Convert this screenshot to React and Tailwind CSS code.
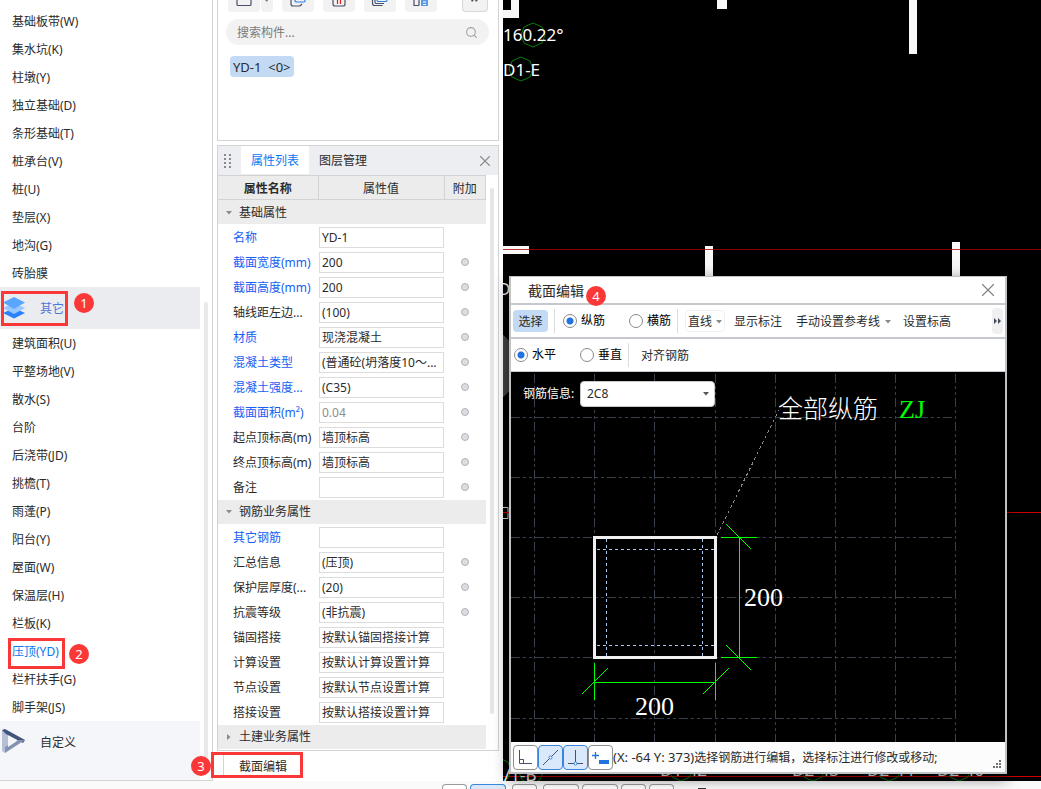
import React from 'react';
import { X, Search } from 'lucide-react';

const foundationItems = [
  '基础板带(W)', '集水坑(K)', '柱墩(Y)', '独立基础(D)', '条形基础(T)',
  '桩承台(V)', '桩(U)', '垫层(X)', '地沟(G)', '砖胎膜',
];

const otherItems = [
  '建筑面积(U)', '平整场地(V)', '散水(S)', '台阶', '后浇带(JD)', '挑檐(T)', '雨蓬(P)',
  '阳台(Y)', '屋面(W)', '保温层(H)', '栏板(K)', '压顶(YD)', '栏杆扶手(G)', '脚手架(JS)',
];

const basicProps = [
  { label: '名称', value: 'YD-1', key: true },
  { label: '截面宽度(mm)', value: '200', key: true, extra: true },
  { label: '截面高度(mm)', value: '200', key: true, extra: true },
  { label: '轴线距左边...', value: '(100)', extra: true },
  { label: '材质', value: '现浇混凝土', key: true, extra: true },
  { label: '混凝土类型', value: '(普通砼(坍落度10～...', key: true, extra: true },
  { label: '混凝土强度...', value: '(C35)', key: true, extra: true },
  { label: '截面面积(m²)', value: '0.04', key: true, extra: true, muted: true },
  { label: '起点顶标高(m)', value: '墙顶标高', extra: true },
  { label: '终点顶标高(m)', value: '墙顶标高', extra: true },
  { label: '备注', value: '', extra: true },
];

const rebarProps = [
  { label: '其它钢筋', value: '', key: true },
  { label: '汇总信息', value: '(压顶)', extra: true },
  { label: '保护层厚度(...', value: '(20)', extra: true },
  { label: '抗震等级', value: '(非抗震)', extra: true },
  { label: '锚固搭接', value: '按默认锚固搭接计算' },
  { label: '计算设置', value: '按默认计算设置计算' },
  { label: '节点设置', value: '按默认节点设置计算' },
  { label: '搭接设置', value: '按默认搭接设置计算' },
];

const gridX = [23, 83, 143, 204, 264, 324, 384, 444];
const gridY = [45, 105, 165, 225, 285, 346];

function Badge({ n, className }) {
  return (
    <span className={`absolute z-10 flex size-5 items-center justify-center rounded-full bg-[#fb3838] text-[13px] leading-none text-white ${className}`}>
      {n}
    </span>
  );
}

function Caret({ className = '' }) {
  return (
    <svg width="6" height="4" viewBox="0 0 6 4" className={className} fill="currentColor">
      <path d="M0 0h6L3 3.5z" />
    </svg>
  );
}

function Sidebar() {
  return (
    <nav className="relative flex w-[213px] shrink-0 flex-col border-r border-b border-[#d3d3d3] bg-white">
      <ul className="mr-3 pt-[7px]">
        {foundationItems.map((item) => (
          <li key={item} className="flex h-7 items-center pt-[2px] pl-3">
            <button>{item}</button>
          </li>
        ))}
      </ul>
      <div className="relative mr-3 flex h-[42px] items-center bg-[#ebecf0] text-[#4a78d8]">
        <svg width="24" height="22" viewBox="0 0 24 22" className="ml-[2px]">
          <path d="M1 16l11-5 11 5-11 5.500z" fill="#2b82ff" />
          <path d="M1 11l11-5 11 5-11 6z" fill="#98c6ff" />
          <path d="M1 5.500L12 0l11 5.500L12 12z" fill="#5aa5ff" />
        </svg>
        <button className="ml-[14px] pt-[2px]">其它</button>
        <span className="absolute top-1 left-px h-[35px] w-[67px] border-3 border-[#fb3838]" />
        <Badge n={1} className="top-[6px] left-[74px]" />
      </div>
      <ul className="mr-3">
        {otherItems.map((item) => (
          <li key={item} className="relative flex h-7 items-center pt-[2px] pl-3">
            {item === '压顶(YD)' ? (
              <>
                <button className="text-[#0a78f0]">{item}</button>
                <span className="absolute top-px left-2 h-[31px] w-[57px] border-3 border-[#fb3838]" />
                <Badge n={2} className="top-[7px] left-[69px]" />
              </>
            ) : (
              <button>{item}</button>
            )}
          </li>
        ))}
      </ul>
      <div className="mr-3 flex flex-1 items-start bg-[#f5f6fa] pt-2">
        <svg width="24" height="26" viewBox="0 0 24 26" className="ml-[2px]">
          <path d="M0 1l6 4v14l-3 5-3-2z" fill="#b5bfd6" />
          <path d="M0 1l3-1 20 11-2 3L4 5z" fill="#42557d" />
          <path d="M23 11L3 24v-6l13-7z" fill="#8492b3" />
          <path d="M6 7l9 5-9 6z" fill="#f5f6fa" />
        </svg>
        <button className="mt-1 ml-[14px] leading-5">自定义</button>
      </div>
      <span className="absolute top-[302px] right-1 bottom-5 w-1 rounded-full bg-[#e9e9e9]" />
    </nav>
  );
}

function ComponentList() {
  const tool = 'flex h-3 items-start justify-center rounded-b bg-[#f2f2f3]';
  return (
    <section className="flex h-[141px] flex-col border border-t-0 border-[#d3d3d3] bg-white">
      <div className="flex pl-[10px]">
        <button aria-label="新建" className={`${tool} w-8`}>
          <svg width="16" height="7" fill="none" stroke="#4a5068" strokeWidth="1.200"><path d="M1 0v4.500q0 1 1 1h12q1 0 1-1V0" /></svg>
        </button>
        <button aria-label="新建选项" className={`${tool} ml-px w-3`}>
          <svg width="4" height="3" fill="#777"><path d="M0 0h3L2 2z" /></svg>
        </button>
        <button aria-label="复制" className={`${tool} ml-[9px] w-8`}>
          <svg width="18" height="7" fill="none" strokeWidth="1.200">
            <path d="M2 0v4q0 2 2 2h7l2-2" stroke="#4a5068" />
            <path d="M6 0v1l1 1h8q1 0 1-2" stroke="#2b7de0" />
          </svg>
        </button>
        <button aria-label="删除" className={`${tool} ml-[9px] w-8`}>
          <svg width="14" height="7" fill="none" strokeWidth="1.200">
            <path d="M1 0v4q0 2 2 2h8q2 0 2-2V0" stroke="#4a5068" />
            <path d="M5.500 0v4M8.500 0v4" stroke="#e02020" />
          </svg>
        </button>
        <button aria-label="层间复制" className={`${tool} ml-[9px] w-8`}>
          <svg width="18" height="7" fill="none" strokeWidth="1.200">
            <path d="M1.500 0v3q0 2.500 2 2.500h8M4 0v2q0 1.500 1 1.500h8" stroke="#4a5068" />
            <path d="M6 0q0 1.500 1 1.500h8q1 0 1-1.500" stroke="#2b7de0" />
          </svg>
        </button>
        <button aria-label="存档" className={`${tool} ml-[9px] w-8`}>
          <svg width="16" height="7" fill="none" strokeWidth="1.200">
            <path d="M1 0v5.500h5M6 0v5.500" stroke="#4a5068" />
            <path d="M8 0h7v6H8z" fill="#5a9bea" />
            <path d="M10 2h3M10 4.500h3" stroke="#fff" />
          </svg>
        </button>
        <button aria-label="更多" className="ml-[25px] flex h-3 w-[26px] items-start justify-center rounded-b border border-t-0 border-[#d8d8d8] bg-[#f2f2f3]">
          <svg width="8" height="3" fill="#555"><path d="M0 0h3L1 2zM4 0h3L5 2z" /></svg>
        </button>
      </div>
      <label className="mt-[7px] mr-[9px] ml-2 flex h-[26px] items-center rounded-full bg-[#f2f2f2] px-[11px]">
        <input className="w-full bg-transparent pt-[2px] outline-none placeholder:text-[#7a7a7a]" placeholder="搜索构件..." aria-label="搜索构件" />
        <Search className="size-[13px] shrink-0 text-[#a0a0a0]" />
      </label>
      <button className="mt-[11px] ml-3 h-[21px] self-start rounded-sm bg-[#c2daf3] px-[3px] text-[13px]">YD-1 &nbsp;&lt;0&gt;</button>
    </section>
  );
}

function GroupRow({ title, closed }) {
  return (
    <tr className="h-[25px]">
      <td colSpan={3} className="border-b border-white bg-[#ececec] p-0 pt-px">
        <button className="flex items-center">
          <Caret className={`ml-2 text-[#8a8a8a] ${closed ? '-rotate-90' : ''}`} />
          <span className="ml-[7px]">{title}</span>
        </button>
      </td>
    </tr>
  );
}

function PropRow({ row }) {
  return (
    <tr className="h-[25px]">
      <td className={`overflow-hidden p-0 pt-[2px] pl-[15px] whitespace-nowrap ${row.key ? 'text-[#1560f5]' : ''}`}>
        <label htmlFor={row.label}>{row.label}</label>
      </td>
      <td className="p-0 pl-px">
        <input
          id={row.label}
          defaultValue={row.value}
          className={`block h-[21px] w-[125px] border border-[#dcdcdc] bg-white px-[2px] outline-none ${row.muted ? 'text-[#8c8c8c]' : ''}`}
        />
      </td>
      <td className="p-0 text-center">
        {row.extra && (
          <input
            type="checkbox"
            aria-label={`附加 ${row.label}`}
            className="mx-auto block size-2 appearance-none rounded-full border border-[#b3b4b8] bg-[#dcdde0]"
          />
        )}
      </td>
    </tr>
  );
}

function PropertyPanel() {
  return (
    <section className="relative mt-1 border border-[#d3d3d3] bg-white">
      <header className="flex h-[29px] items-center bg-[#edeef1]">
        <svg width="7" height="14" className="ml-[6px]" fill="#8a8a8a">
          {[0, 4, 8, 12].map((y) => (
            <path key={y} d={`M0 ${y}h2v2h-2zM5 ${y}h2v2h-2z`} />
          ))}
        </svg>
        <button className="ml-[10px] h-7 w-[68px] self-start bg-white pt-[2px] text-[#0a78f0]">属性列表</button>
        <button className="ml-[10px]">图层管理</button>
        <button aria-label="关闭" className="mr-1 ml-auto text-[#8c8c8c]">
          <X size={18} strokeWidth={1.5} />
        </button>
      </header>
      <table className="w-[268px] table-fixed border-collapse">
        <thead>
          <tr className="h-6 bg-[#ececec]">
            <th className="w-[100px] border border-l-0 border-[#d3d3d3] p-0 pt-[2px] font-bold">属性名称</th>
            <th className="w-[126px] border border-[#d3d3d3] p-0 pt-[2px] font-normal">属性值</th>
            <th className="border border-[#d3d3d3] p-0 pt-[2px] font-normal">附加</th>
          </tr>
        </thead>
        <tbody>
          <GroupRow title="基础属性" />
          {basicProps.map((row) => <PropRow key={row.label} row={row} />)}
          <GroupRow title="钢筋业务属性" />
          {rebarProps.map((row) => <PropRow key={row.label} row={row} />)}
          <GroupRow title="土建业务属性" closed />
        </tbody>
      </table>
      <span className="absolute top-[42px] right-1 bottom-9 w-1 rounded-full bg-[#e6e6e6]" />
    </section>
  );
}

function Mark({ x, y }) {
  return (
    <polygon
      points={`${x},${y - 12} ${x + 9},${y - 8} ${x + 12},${y} ${x + 9},${y + 8} ${x},${y + 12} ${x - 9},${y + 8} ${x - 12},${y} ${x - 9},${y - 8}`}
      fill="none"
      stroke="#0a7d0a"
    />
  );
}

function ModelView() {
  return (
    <svg className="absolute inset-0 size-full" fontSize="17">
      <g fill="#f8f8f8">
        <path d="M8 0h8v18H0v-8h8z" />
        <rect x="214" y="0" width="10" height="9" />
        <rect x="406" y="0" width="8" height="54" />
        <rect x="0" y="246" width="26" height="8" />
        <rect x="202" y="246" width="8" height="40" />
        <rect x="449" y="242" width="8" height="40" />
      </g>
      <path d="M0 249.500h800" stroke="#b00000" strokeOpacity="0.800" />
      <Mark x={30} y={35} />
      <Mark x={18} y={69} />
      <circle cx="-25" cy="366" r="40" fill="#444" />
      <path d="M0 507.500h5v11H0" fill="none" stroke="#ddd" />
      <path d="M0 512.500h800M0 776.500h800" stroke="#d00000" />
      {[178, 310, 386, 456].map((x) => <Mark key={x} x={x} y={769} />)}
      <Mark x={-4} y={770} />
      <Mark x={28} y={772} />
      <g fill="#fff">
        <text x="0" y="41">160.22°</text>
        <text x="0" y="76">D1-E</text>
        <text x="-5" y="295">D</text>
        <text x="1" y="781">/1-B</text>
        <text x="157" y="776">D1-42</text>
        <text x="289" y="776">D2-43</text>
        <text x="364" y="776">D2-44</text>
        <text x="434" y="776">D2-46</text>
      </g>
    </svg>
  );
}

function SectionDrawing() {
  return (
    <svg className="block h-[370px] w-full bg-black" shapeRendering="crispEdges">
      <g stroke="#39404c" strokeDasharray="9 3 3 3 3 3">
        {gridX.map((x) => <line key={x} x1={x + 0.5} y1="2" x2={x + 0.5} y2="370" />)}
        {gridY.map((y) => <line key={y} x1="0" y1={y + 0.5} x2="445" y2={y + 0.5} />)}
      </g>
      <rect x="83.500" y="165.500" width="121" height="120" fill="none" stroke="#f0f0f0" strokeWidth="3" />
      <path d="M95.500 167v118M191.500 167v118M86 177.500h117M86 273.500h117" stroke="#a9c8f0" strokeDasharray="3 3" />
      <path d="M206 163L268 38" stroke="#8c8c8c" strokeDasharray="3 3" />
      <g stroke="#00ff00" fill="none">
        <path d="M228.500 165v120M210 165.500h36M210 285.500h36M215 152l25 25M215 273l25 25" />
        <path d="M84 310.500h120M83.500 291v37M204.500 291v37M71 322l26-26M192 322l26-26" />
      </g>
      <text x="267" y="46" fontSize="25" fontWeight="300" fill="#fff">全部纵筋</text>
      <g fontFamily="Liberation Serif, serif" fontSize="26">
        <text x="388" y="46" fill="#00ff00">ZJ</text>
        <text x="233" y="234" fill="#fff">200</text>
        <text x="124" y="343" fill="#fff">200</text>
      </g>
    </svg>
  );
}

function Radio({ name, label, checked }) {
  return (
    <label className="flex items-center gap-1 text-black">
      <input
        type="radio"
        name={name}
        defaultChecked={checked}
        className="size-[14px] appearance-none rounded-full border border-[#8a8a8a] bg-white checked:bg-[radial-gradient(circle,#1f74e0_3px,transparent_4px)]"
      />
      {label}
    </label>
  );
}

function StatusButton({ label, active, children }) {
  return (
    <button
      aria-label={label}
      className={`flex size-[25px] items-center justify-center rounded-sm border ${active ? 'border-[#3a85dd] bg-[#d9e8fb]' : 'border-[#8f8f8f] bg-white'}`}
    >
      <svg width="19" height="19" viewBox="0 0 19 19" fill="none" stroke="#4a5068">{children}</svg>
    </button>
  );
}

function SectionEditor() {
  return (
    <div role="dialog" aria-label="截面编辑" className="absolute top-[276px] left-[6px] flex w-[498px] flex-col border-2 border-t border-[#bfc2c7] bg-white shadow-[0_4px_14px_rgba(0,0,0,0.55)]">
      <header className="relative flex h-[26px] items-center pl-[17px]">
        <h2 className="pt-[2px] text-sm">截面编辑</h2>
        <Badge n={4} className="top-[9px] left-[75px]" />
        <button aria-label="关闭" className="mr-[6px] ml-auto text-[#808080]">
          <X size={22} strokeWidth={1.2} />
        </button>
      </header>
      <div className="flex h-[34px] items-center border-t-2 border-[#c5c8cd] pl-[2px]">
        <button className="h-[22px] w-[35px] rounded-sm bg-[#c2daf3] pt-[2px]">选择</button>
        <span className="mx-[6px] h-6 w-px bg-[#dcdcdc]" />
        <div className="ml-[2px] flex gap-6">
          <Radio name="bar" label="纵筋" checked />
          <Radio name="bar" label="横筋" />
        </div>
        <span className="ml-[6px] h-6 w-px bg-[#dcdcdc]" />
        <button className="ml-[7px] flex h-[22px] w-10 items-center justify-between rounded-sm border border-[#f0f0f0] px-[2px] pt-[2px]">
          直线<Caret className="text-[#8a8a8a]" />
        </button>
        <button className="ml-[9px] pt-[2px]">显示标注</button>
        <button className="ml-[14px] flex items-center gap-[5px] pt-[2px]">
          手动设置参考线<Caret className="text-[#8a8a8a]" />
        </button>
        <button className="ml-3 pt-[2px]">设置标高</button>
        <button aria-label="更多工具" className="mr-[2px] ml-auto flex h-[26px] w-[11px] items-center justify-center rounded bg-[#f0f0f1]">
          <svg width="7" height="6" fill="#444a5c"><path d="M0 0l3 3-3 3zM4 0l3 3-3 3z" /></svg>
        </button>
      </div>
      <div className="flex h-[35px] items-center border-t-2 border-b border-[#c5c8cd] pl-[3px]">
        <div className="flex gap-6">
          <Radio name="dir" label="水平" checked />
          <Radio name="dir" label="垂直" />
        </div>
        <span className="ml-[6px] h-6 w-px bg-[#dcdcdc]" />
        <button className="ml-3 pt-[2px]">对齐钢筋</button>
      </div>
      <div className="relative">
        <SectionDrawing />
        <div className="absolute top-[9px] left-3 flex items-center">
          <label htmlFor="rebar" className="w-[57px] text-white">钢筋信息:</label>
          <div className="relative flex items-center">
            <select id="rebar" className="h-[26px] w-[135px] appearance-none rounded-sm border border-[#c8c8c8] bg-white pl-[6px]">
              <option>2C8</option>
            </select>
            <Caret className="pointer-events-none absolute right-[6px] text-[#555]" />
          </div>
        </div>
      </div>
      <footer className="relative flex h-[30px] items-center bg-[#fcfcfc] pl-[2px]">
        <StatusButton label="正交">
          <path d="M3.500 2v13.500H16M3.500 11.500h4v4" />
        </StatusButton>
        <StatusButton label="直线捕捉" active>
          <path d="M2 17L17 2" />
          <circle cx="9.500" cy="9.500" r="1.500" fill="#fff" stroke="#2b7de0" />
        </StatusButton>
        <StatusButton label="垂点捕捉" active>
          <path d="M2 15.500h15M9.500 2v12" />
          <circle cx="9.500" cy="15.500" r="1.500" fill="#fff" stroke="#2b7de0" />
        </StatusButton>
        <StatusButton label="动态输入">
          <path d="M1 7.500h7M4.500 4v7" stroke="#1f74e0" strokeWidth="1.300" />
          <path d="M8 12h10v4H8z" fill="#1f74e0" stroke="none" />
        </StatusButton>
        <span className="whitespace-nowrap">
          <span className="text-[13px]">(X: -64 Y: 373)</span>选择钢筋进行编辑，选择标注进行修改或移动;
        </span>
        <svg width="8" height="8" className="absolute right-1 bottom-1" fill="#707070">
          <path d="M6 0h2v2H6zM6 3h2v2H6zM6 6h2v2H6zM3 3h2v2H3zM3 6h2v2H3zM0 6h2v2H0z" />
        </svg>
      </footer>
    </div>
  );
}

function BottomBar() {
  const btn = 'h-[5px] rounded-t border border-b-0 border-[#9a9a9a] bg-white';
  return (
    <footer className="flex h-2 shrink-0 items-end bg-[#fafafa] pl-[442px]">
      <button aria-label="工具 1" className={`${btn} w-[25px]`} />
      <button aria-label="工具 2" className="ml-[3px] h-[5px] w-9 rounded-t border border-b-0 border-[#3a85dd] bg-[#d9e8fb]" />
      <button aria-label="工具 3" className={`${btn} ml-[6px] w-[25px]`} />
      <button aria-label="工具 4" className={`${btn} ml-[6px] w-9`} />
      <button aria-label="工具 5" className={`${btn} ml-[3px] w-9`} />
      <button aria-label="工具 6" className={`${btn} ml-[3px] w-[25px]`} />
      <button aria-label="工具 7" className={`${btn} ml-[3px] w-[25px]`} />
      <span className="ml-6 h-px w-2 bg-[#333]" />
    </footer>
  );
}

export default function App() {
  return (
    <div className="flex h-screen flex-col overflow-hidden bg-white font-['Noto_Sans','Noto_Sans_CJK_SC',sans-serif] text-xs leading-4 text-[#2b2b2b]">
      <div className="flex min-h-0 flex-1">
        <Sidebar />
        <div className="flex w-[290px] shrink-0 flex-col bg-white pr-1 pl-1">
          <ComponentList />
          <PropertyPanel />
          <div className="relative mt-1 ml-[6px] flex h-[23px] items-center border-l border-[#d3d3d3]">
            <button className="ml-[15px]">截面编辑</button>
            <span className="absolute top-[-3px] left-[-13px] h-[26px] w-[92px] border-3 border-[#fb3838]" />
            <Badge n={3} className="top-px left-[-33px]" />
          </div>
        </div>
        <main className="relative min-w-0 flex-1 bg-black">
          <ModelView />
          <SectionEditor />
        </main>
      </div>
      <BottomBar />
    </div>
  );
}
